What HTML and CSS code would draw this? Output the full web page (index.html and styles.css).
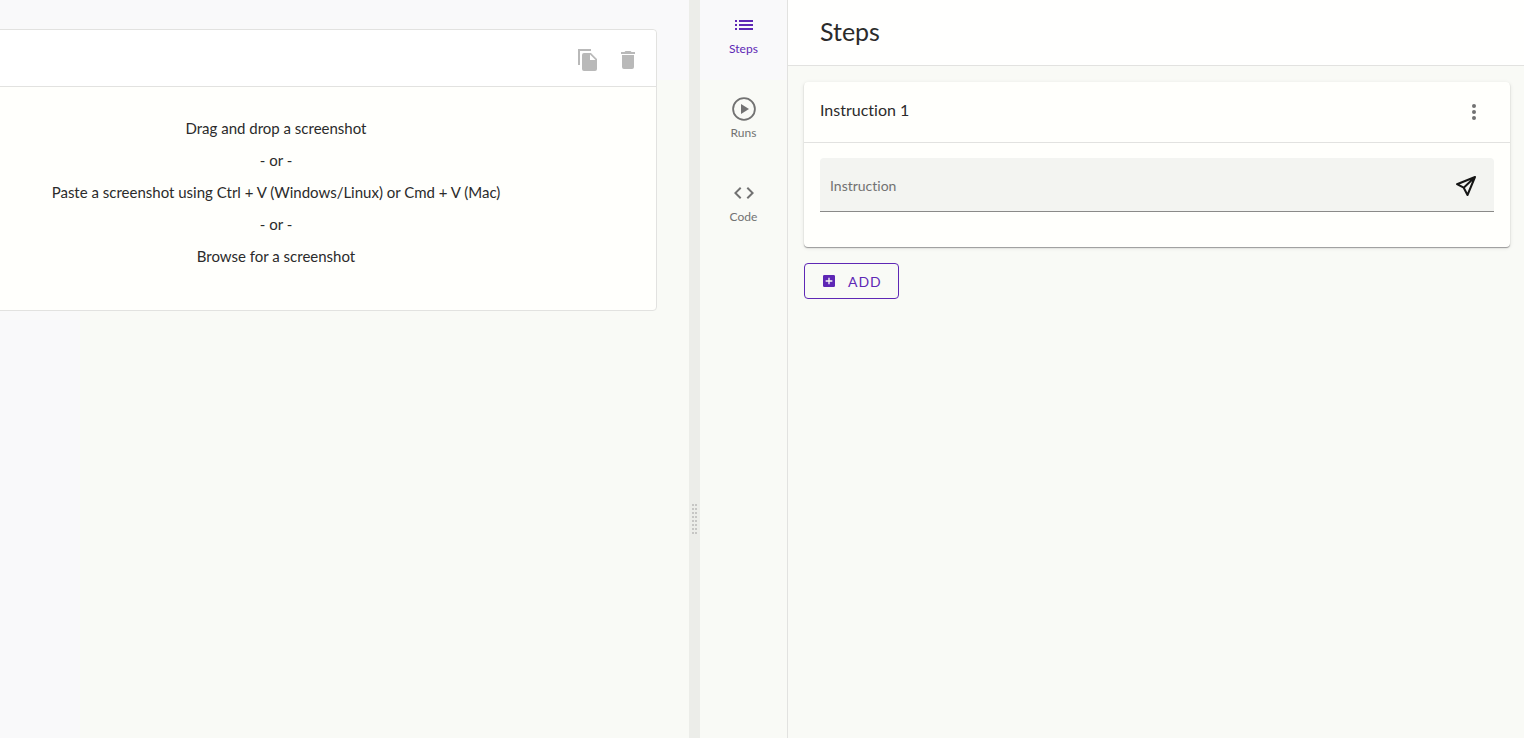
FILE: index.html
```html
<!DOCTYPE html>
<html lang="en">
<head>
<meta charset="utf-8">
<meta name="viewport" content="width=device-width, initial-scale=1">
<title>Steps</title>
<link rel="stylesheet" href="styles.css">
</head>
<body>
<div class="app">
  <section class="workspace" aria-label="Screenshot">
    <div class="drop-card">
      <div class="drop-toolbar">
        <button class="icon-button" type="button" aria-label="Copy" disabled>
          <svg width="24" height="24" viewBox="0 0 24 24"><path d="M2 1h13v2H4v14H2z"/><path d="M8 5h7l6 6v10a2 2 0 0 1-2 2H8a2 2 0 0 1-2-2V7a2 2 0 0 1 2-2zm6 1.500V12h5.500z" fill-rule="evenodd"/></svg>
        </button>
        <button class="icon-button" type="button" aria-label="Delete" disabled>
          <svg width="24" height="24" viewBox="0 0 24 24"><path d="M19 4h-3.500l-1-1h-5l-1 1H5v2h14M6 19a2 2 0 0 0 2 2h8a2 2 0 0 0 2-2V7H6z"/></svg>
        </button>
      </div>
      <div class="drop-area">
        <p>Drag and drop a screenshot</p>
        <p>- or -</p>
        <p>Paste a screenshot using Ctrl + V (Windows/Linux) or Cmd + V (Mac)</p>
        <p>- or -</p>
        <p>Browse for a screenshot</p>
      </div>
    </div>
  </section>
  <div class="splitter" role="separator" aria-orientation="vertical"><span class="grip"></span></div>
  <nav class="rail">
    <a class="rail-item active" href="#steps">
      <svg width="24" height="24" viewBox="0 0 24 24"><path d="M7 7h14v2H7zM7 11h14v2H7zM7 15h14v2H7zM3 7h2v2H3zM3 11h2v2H3zM3 15h2v2H3z"/></svg>
      <span>Steps</span>
    </a>
    <a class="rail-item" href="#runs">
      <svg width="24" height="24" viewBox="0 0 24 24"><circle cx="12" cy="12" r="10.900" fill="none" stroke="currentColor" stroke-width="1.800"/><path d="M9 7v10l8-5z"/></svg>
      <span>Runs</span>
    </a>
    <a class="rail-item" href="#code">
      <svg width="24" height="24" viewBox="0 0 24 24"><path d="M14.600 16.600l4.600-4.600-4.600-4.600L16 6l6 6-6 6-1.400-1.400m-5.200 0L4.800 12l4.600-4.600L8 6l-6 6 6 6 1.400-1.400z"/></svg>
      <span>Code</span>
    </a>
  </nav>
  <main class="steps">
    <header class="steps-header"><h1>Steps</h1></header>
    <div class="steps-body">
      <article class="step-card">
        <header class="step-header">
          <h2>Instruction 1</h2>
          <button class="icon-button more" type="button" aria-label="More options">
            <svg width="24" height="24" viewBox="0 0 24 24"><circle cx="12" cy="6" r="2"/><circle cx="12" cy="12" r="2"/><circle cx="12" cy="18" r="2"/></svg>
          </button>
        </header>
        <div class="step-content">
          <div class="field">
            <input type="text" aria-label="Instruction" placeholder="Instruction">
            <button class="icon-button send" type="button" aria-label="Send">
              <svg width="24" height="24" viewBox="0 0 24 24"><path d="M21 3L3 10.200l6.700 3.500L13.500 21zM21 3l-11.300 10.700" fill="none" stroke="currentColor" stroke-width="2" stroke-linejoin="round"/></svg>
            </button>
          </div>
        </div>
      </article>
      <button class="add-button" type="button">
        <svg width="16" height="16" viewBox="0 0 24 24"><path d="M5 3h14a2 2 0 0 1 2 2v14a2 2 0 0 1-2 2H5a2 2 0 0 1-2-2V5a2 2 0 0 1 2-2zm6 4v4H7v2h4v4h2v-4h4v-2h-4V7z" fill-rule="evenodd"/></svg>
        <span>ADD</span>
      </button>
    </div>
  </main>
</div>
</body>
</html>
```
FILE: styles.css
```css
* {
  box-sizing: border-box;
}

:root {
  --accent: #5e27b5;
  --ink: #2b2b2b;
  --muted: #727272;
  --line: #e2e2e0;
  --surface: #fffffc;
  --page: #f9faf6;
  --page-cool: #f9f9fa;
}

body {
  margin: 0;
  color: var(--ink);
  background: var(--page);
  font-family: Lato, "Open Sans", sans-serif;
  font-size: 14px;
  font-variant-ligatures: none;
}

h1, h2, p {
  margin: 0;
  font-weight: 400;
}

svg {
  display: block;
  flex: none;
  fill: currentColor;
}

button {
  font: inherit;
  cursor: pointer;
}

.app {
  display: flex;
  min-height: 100vh;
}

.workspace {
  flex: 657 1 0;
  min-width: 0;
  overflow: hidden;
  padding: 29px 32px 32px 0;
  background: linear-gradient(to right, var(--page-cool) 80px, transparent 80px),
    linear-gradient(to bottom, var(--page-cool) 80px, transparent 80px);
}

.drop-card {
  margin-left: -105px;
  border: 1px solid var(--line);
  border-radius: 4px;
  background: var(--surface);
}

.drop-toolbar {
  display: flex;
  justify-content: flex-end;
  gap: 16px;
  padding: 18px 16px 14px;
  border-bottom: 1px solid var(--line);
  border-radius: 4px 4px 0 0;
  background: #fff;
}

.icon-button {
  display: grid;
  place-items: center;
  padding: 0;
  border: 0;
  color: var(--muted);
  background: none;
}

.icon-button:disabled {
  color: #b9b9b9;
}

.drop-area {
  display: grid;
  gap: 8px;
  padding: 29px 16px 42px;
  font-size: 15px;
  line-height: 24px;
  text-align: center;
}

.splitter {
  display: flex;
  justify-content: center;
  align-items: flex-end;
  width: 11px;
  padding-bottom: 204px;
  background: #ecede9;
}

.grip {
  width: 5px;
  height: 30px;
  background: repeating-linear-gradient(to bottom, transparent 0 2px, #ecede9 2px 4px),
    linear-gradient(to right, #c6c6c4 2px, transparent 2px 3px, #c6c6c4 3px);
}

.rail {
  display: flex;
  flex-direction: column;
  gap: 39px;
  width: 88px;
  padding-top: 13px;
  border-right: 1px solid var(--line);
  background: linear-gradient(to bottom, var(--page-cool) 80px, transparent 80px);
}

.rail-item {
  display: flex;
  flex-direction: column;
  align-items: center;
  gap: 3px;
  color: var(--muted);
  font-size: 12px;
  line-height: 18px;
  text-decoration: none;
}

.rail-item.active {
  color: var(--accent);
}

.steps {
  flex: 736 1 0;
  min-width: 0;
}

.steps-header {
  padding: 15px 32px 18px;
  border-bottom: 1px solid var(--line);
  background: #fffffe;
}

.steps-header h1 {
  font-size: 25px;
  line-height: 32px;
}

.steps-body {
  padding: 16px 14px 16px 16px;
}

.step-card {
  margin-bottom: 16px;
  border-radius: 4px;
  background: var(--surface);
  box-shadow: 0 1px 1px #999, 0 1px 4px #0000001a;
}

.step-header {
  display: flex;
  justify-content: space-between;
  align-items: flex-start;
  padding: 16px 24px 16px 16px;
  border-bottom: 1px solid var(--line);
}

.step-header h2 {
  font-size: 16px;
  line-height: 24px;
}

.icon-button.more {
  height: 28px;
}

.step-content {
  padding: 15px 16px 35px;
}

.field {
  display: flex;
  align-items: center;
  height: 54px;
  padding: 2px 16px 0 10px;
  border-bottom: 1px solid #8a8a88;
  border-radius: 4px 4px 0 0;
  background: #f3f4f1;
}

.field input {
  flex: 1;
  min-width: 0;
  padding: 0;
  border: 0;
  outline: 0;
  color: var(--ink);
  background: none;
  font: inherit;
  line-height: 24px;
}

.field input::placeholder {
  color: var(--muted);
  opacity: 1;
}

.icon-button.send {
  color: #151515;
}

.add-button {
  display: inline-flex;
  align-items: center;
  gap: 11px;
  height: 36px;
  padding: 0 16px;
  border: 1px solid var(--accent);
  border-radius: 4px;
  color: var(--accent);
  background: none;
  letter-spacing: 1px;
}
```
